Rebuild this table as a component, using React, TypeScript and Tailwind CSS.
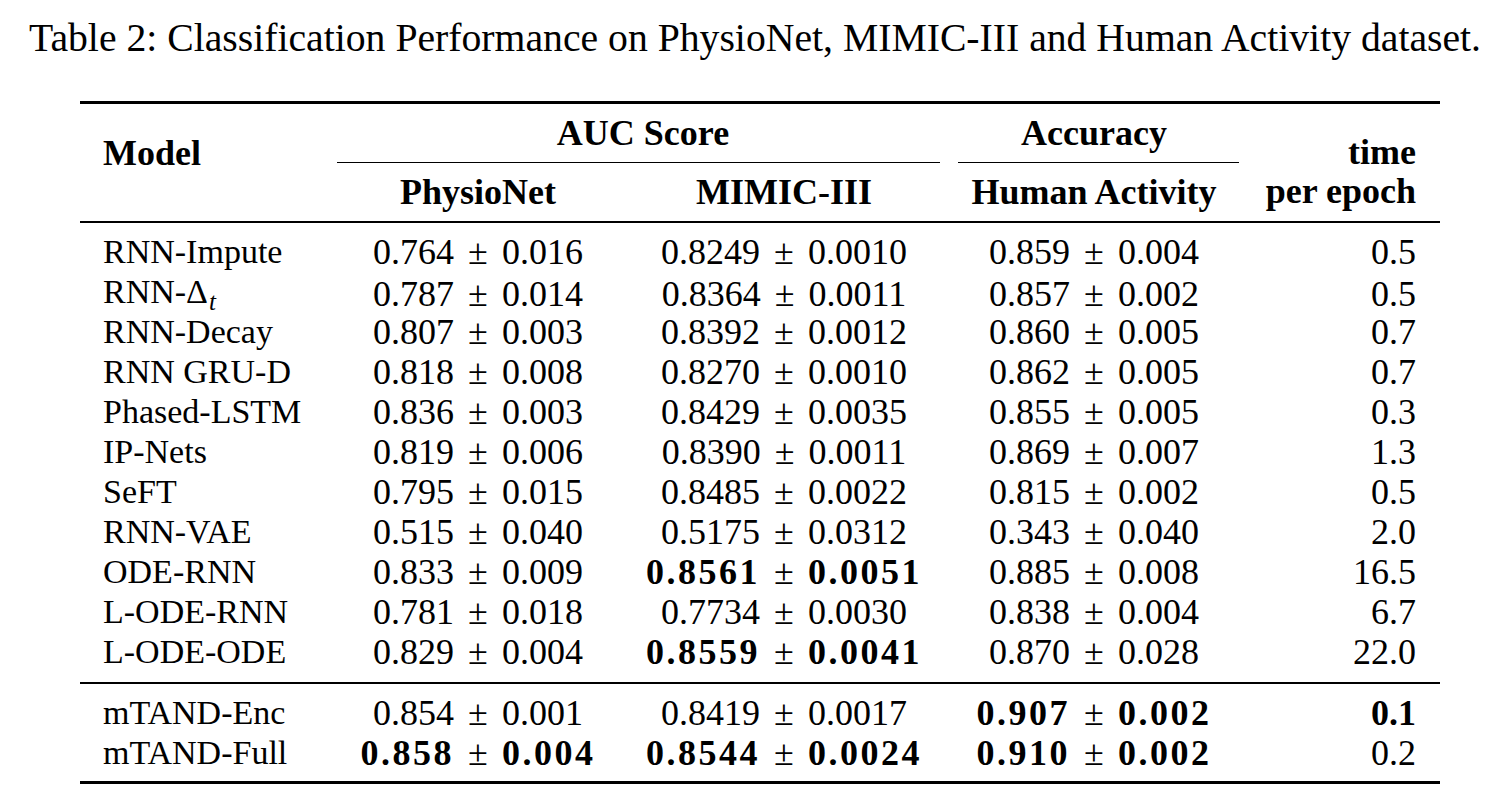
import React from "react";

type Cell = { a: string; b: string; bold?: boolean };
type Row = {
  name: React.ReactNode;
  p: Cell;
  m: Cell;
  h: Cell;
  t: string;
  tb?: boolean;
};

const c = (a: string, b: string, bold = false): Cell => ({ a, b, bold });

const group1: Row[] = [
  { name: "RNN-Impute", p: c("0.764", "0.016"), m: c("0.8249", "0.0010"), h: c("0.859", "0.004"), t: "0.5" },
  {
    name: (
      <span>
        RNN-Δ<span className="italic text-[25px] relative top-[7px] ml-[1px]">t</span>
      </span>
    ),
    p: c("0.787", "0.014"),
    m: c("0.8364", "0.0011"),
    h: c("0.857", "0.002"),
    t: "0.5",
  },
  { name: "RNN-Decay", p: c("0.807", "0.003"), m: c("0.8392", "0.0012"), h: c("0.860", "0.005"), t: "0.7" },
  { name: "RNN GRU-D", p: c("0.818", "0.008"), m: c("0.8270", "0.0010"), h: c("0.862", "0.005"), t: "0.7" },
  { name: "Phased-LSTM", p: c("0.836", "0.003"), m: c("0.8429", "0.0035"), h: c("0.855", "0.005"), t: "0.3" },
  { name: "IP-Nets", p: c("0.819", "0.006"), m: c("0.8390", "0.0011"), h: c("0.869", "0.007"), t: "1.3" },
  { name: "SeFT", p: c("0.795", "0.015"), m: c("0.8485", "0.0022"), h: c("0.815", "0.002"), t: "0.5" },
  { name: "RNN-VAE", p: c("0.515", "0.040"), m: c("0.5175", "0.0312"), h: c("0.343", "0.040"), t: "2.0" },
  { name: "ODE-RNN", p: c("0.833", "0.009"), m: c("0.8561", "0.0051", true), h: c("0.885", "0.008"), t: "16.5" },
  { name: "L-ODE-RNN", p: c("0.781", "0.018"), m: c("0.7734", "0.0030"), h: c("0.838", "0.004"), t: "6.7" },
  { name: "L-ODE-ODE", p: c("0.829", "0.004"), m: c("0.8559", "0.0041", true), h: c("0.870", "0.028"), t: "22.0" },
];

const group2: Row[] = [
  { name: "mTAND-Enc", p: c("0.854", "0.001"), m: c("0.8419", "0.0017"), h: c("0.907", "0.002", true), t: "0.1", tb: true },
  { name: "mTAND-Full", p: c("0.858", "0.004", true), m: c("0.8544", "0.0024", true), h: c("0.910", "0.002", true), t: "0.2" },
];

const cols = "grid grid-cols-[257px_282px_330px_290px_201px]";

function Num({ cell }: { cell: Cell }) {
  const numCls = cell.bold ? "font-bold tracking-[2.5px]" : "";
  return (
    <div className="flex items-center justify-center h-[40px] leading-[40px] text-[36px]">
      <span className={numCls}>{cell.a}</span>
      <span className="mx-[14px]">±</span>
      <span className={numCls}>{cell.b}</span>
    </div>
  );
}

function BodyRow({ r }: { r: Row }) {
  return (
    <div className={`${cols} h-[40px] items-center leading-[40px]`}>
      <div className="pl-[23px] text-[34px]">{r.name}</div>
      <Num cell={r.p} />
      <Num cell={r.m} />
      <Num cell={r.h} />
      <div className={`text-right pr-[24px] text-[36px] ${r.tb ? "font-bold" : ""}`}>{r.t}</div>
    </div>
  );
}

export default function App() {
  return (
    <div
      className="w-[1510px] h-[798px] bg-white text-black overflow-hidden"
      style={{ fontFamily: '"Liberation Serif", "Times New Roman", serif' }}
    >
      <div className="pt-[18px] text-center text-[39.7px] leading-[40px]">
        Table 2: Classification Performance on PhysioNet, MIMIC-III and Human Activity dataset.
      </div>

      <div className="ml-[80px] w-[1360px] mt-[43px]">
        <div className="h-[3px] bg-black" />

        <div className={`${cols} grid-rows-[58px_1px_58px] font-bold text-[36px]`}>
          <div className="col-start-1 row-start-1 row-span-3 pl-[23px] pt-[29px] leading-[40px]">Model</div>
          <div className="col-start-2 col-span-2 row-start-1 flex items-center justify-center">AUC Score</div>
          <div className="col-start-4 row-start-1 flex items-center justify-center">Accuracy</div>
          <div className="col-start-2 col-span-2 row-start-2 mr-[9px] bg-black" />
          <div className="col-start-4 row-start-2 ml-[9px] bg-black" />
          <div className="col-start-2 row-start-3 flex items-center justify-center">PhysioNet</div>
          <div className="col-start-3 row-start-3 flex items-center justify-center">MIMIC-III</div>
          <div className="col-start-4 row-start-3 flex items-center justify-center">Human Activity</div>
          <div className="col-start-5 row-start-1 row-span-3 text-right pr-[24px] pt-[29px] leading-[39px]">
            <div>time</div>
            <div>per epoch</div>
          </div>
        </div>

        <div className="h-[2px] bg-black" />

        <div className="pt-[9px] pb-[10px]">
          {group1.map((r, i) => (
            <BodyRow key={i} r={r} />
          ))}
        </div>

        <div className="h-[2px] bg-black" />

        <div className="pt-[9px] pb-[8px]">
          {group2.map((r, i) => (
            <BodyRow key={i} r={r} />
          ))}
        </div>

        <div className="h-[3px] bg-black" />
      </div>
    </div>
  );
}
